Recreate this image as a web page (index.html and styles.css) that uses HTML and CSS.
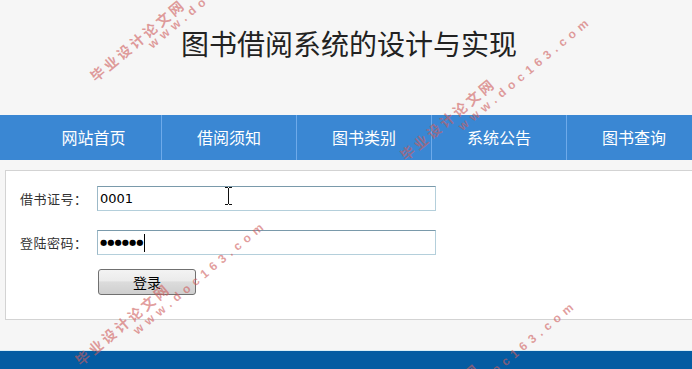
FILE: index.html
```html
<!DOCTYPE html>
<html lang="zh-CN">
<head>
<meta charset="utf-8">
<title>图书借阅系统的设计与实现</title>
<link rel="stylesheet" href="styles.css">
</head>
<body>
<div class="page">
  <header class="header">
    <h1 class="title">图书借阅系统的设计与实现</h1>
  </header>
  <nav class="nav">
    <ul class="nav-list">
      <li class="nav-item">网站首页</li>
      <li class="nav-item">借阅须知</li>
      <li class="nav-item">图书类别</li>
      <li class="nav-item">系统公告</li>
      <li class="nav-item">图书查询</li>
    </ul>
  </nav>
  <main class="panel">
    <div class="form-row">
      <span class="label">借书证号：</span>
      <div class="field" role="textbox">0001</div>
    </div>
    <div class="form-row">
      <span class="label">登陆密码：</span>
      <div class="field field-pass" role="textbox"><span class="dots">●●●●●●</span><span class="caret"></span></div>
    </div>
    <div class="form-row btn-row">
      <span class="label"></span>
      <button class="btn" type="button">登录</button>
    </div>
  </main>
  <footer class="footer"></footer>

  <svg class="ibeam" width="9" height="18" viewBox="0 0 9 18"><path d="M1 .5h3M5 .5h3M4.5 1v16M1 17.5h3M5 17.5h3" stroke="#111" stroke-width="1" fill="none"/></svg>

  <span class="wm wm-cn wm1a">毕业设计论文网</span>
  <span class="wm wm-en wm1b">www.doc163.com</span>
  <span class="wm wm-cn wm2a">毕业设计论文网</span>
  <span class="wm wm-en wm2b">www.doc163.com</span>
  <span class="wm wm-cn wm3a">毕业设计论文网</span>
  <span class="wm wm-en wm3b">www.doc163.com</span>
  <span class="wm wm-cn wm4a">毕业设计论文网</span>
  <span class="wm wm-en wm4b">www.doc163.com</span>
</div>
</body>
</html>
```

FILE: styles.css
```css
html, body {
  margin: 0;
  padding: 0;
  overflow: hidden;
}
body {
  background: #f6f6f6;
  font-family: "Noto Sans CJK SC", "Liberation Sans", sans-serif;
}
.page {
  position: relative;
  height: 369px;
  overflow: hidden;
}
.header {
  height: 115px;
  box-sizing: border-box;
  padding-top: 28px;
}
.title {
  margin: 0;
  text-align: center;
  font-size: 28px;
  line-height: 30px;
  font-weight: normal;
  color: #222;
  padding-left: 6px;
}
.nav {
  height: 45px;
  background: #3a87d3;
}
.nav-list {
  display: flex;
  margin: 0;
  padding: 0 0 0 26px;
  list-style: none;
}
.nav-item {
  flex: 0 0 135px;
  box-sizing: border-box;
  text-align: center;
  line-height: 45px;
  font-size: 16px;
  color: #fff;
}
.nav-item + .nav-item {
  border-left: 1px solid #6eaaea;
}
.panel {
  display: block;
  margin: 10px -30px 0 5px;
  height: 150px;
  box-sizing: border-box;
  background: #fff;
  border: 1px solid #d3d3d3;
  padding: 15px 0 0 14px;
}
.form-row {
  display: flex;
  align-items: center;
  height: 25px;
  margin-bottom: 19px;
}
.btn-row {
  margin-top: -5px;
  height: 26px;
}
.label {
  flex: 0 0 77px;
  font-size: 13px;
  letter-spacing: 0.5px;
  color: #333;
}
.field {
  width: 339px;
  height: 25px;
  box-sizing: border-box;
  border: 1px solid #b4cfdb;
  border-top-color: #7a9aab;
  border-left-color: #9cb9c8;
  padding-left: 2px;
  font-family: "DejaVu Sans", sans-serif;
  font-size: 13px;
  line-height: 23px;
  color: #000;
  display: flex;
  align-items: center;
}
.dots {
  font-size: 8.3px;
  letter-spacing: 0;
  font-family: "DejaVu Sans", sans-serif;
}
.caret {
  display: inline-block;
  width: 1px;
  height: 18px;
  background: #000;
  margin-left: 1px;
}
.btn {
  margin: 0 0 0 1px;
  width: 98px;
  height: 26px;
  box-sizing: border-box;
  border: 1px solid #707070;
  border-radius: 3px;
  background: linear-gradient(#f3f3f3 0%, #ebebeb 45%, #dcdcdc 50%, #cfcfcf 100%);
  font-family: "Noto Sans CJK SC", sans-serif;
  font-size: 14px;
  color: #000;
  padding: 0;
  line-height: 22px;
}
.footer {
  margin-top: 30px;
  height: 20px;
  background: #045ca2;
  border-top: 1px solid #d8eef6;
}
.ibeam {
  position: absolute;
  left: 224px;
  top: 187px;
}
.wm {
  position: absolute;
  white-space: nowrap;
  transform-origin: 0 50%;
  transform: rotate(-40deg);
  line-height: 16px;
  color: rgba(206, 92, 92, 0.6);
  font-weight: bold;
  pointer-events: none;
}
.wm-cn {
  font-family: "Noto Sans CJK SC", sans-serif;
  font-size: 14px;
  letter-spacing: 3px;
}
.wm-en {
  font-family: "Liberation Sans", sans-serif;
  font-size: 12px;
  letter-spacing: 5px;
}
.wm1a { left: 92px; top: 70px; }
.wm1b { left: 150px; top: 38px; }
.wm2a { left: 402px; top: 149px; }
.wm2b { left: 460px; top: 120px; }
.wm3a { left: 77px; top: 354px; }
.wm3b { left: 135px; top: 324px; }
.wm4a { left: 387px; top: 434px; }
.wm4b { left: 445px; top: 404px; }
```
